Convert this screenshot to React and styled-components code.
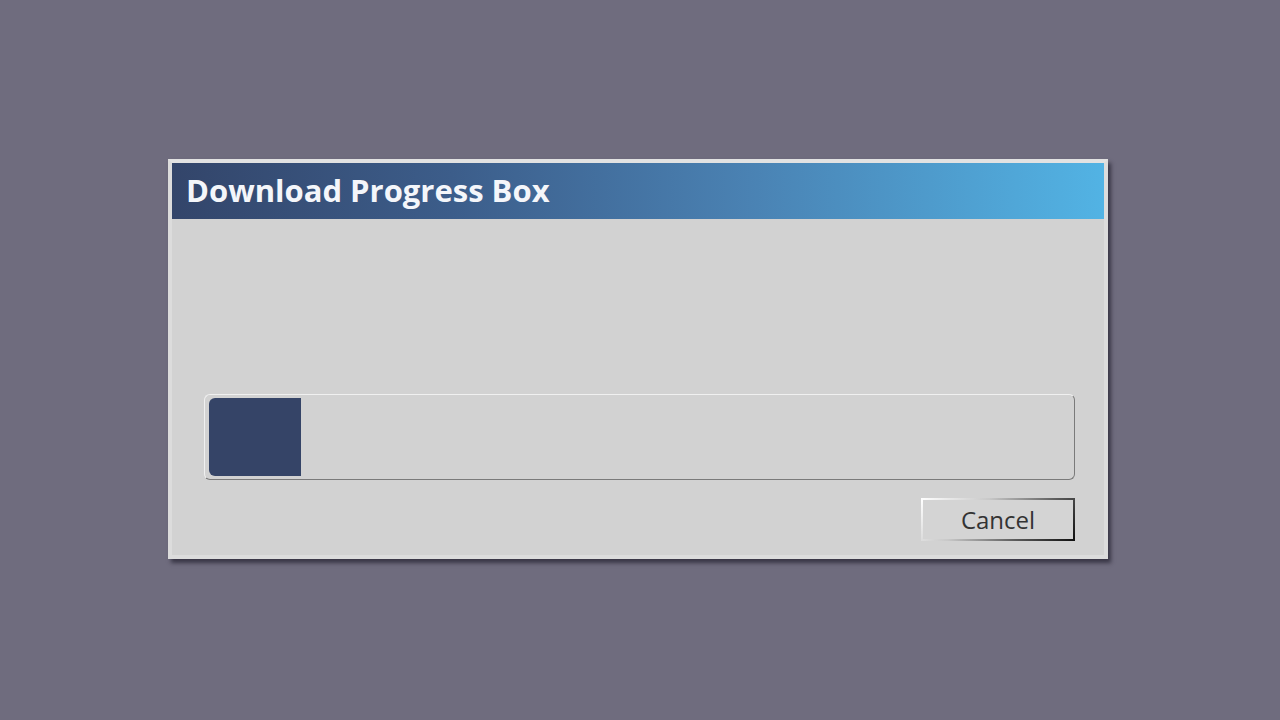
import styled, { createGlobalStyle } from 'styled-components';

const GlobalStyle = createGlobalStyle`
  html, body {
    margin: 0;
    padding: 0;
    background: #6f6c7e;
  }
  body {
    width: 1280px;
    height: 720px;
    overflow: hidden;
    font-family: "Open Sans", "Liberation Sans", sans-serif;
  }
`;

function App() {
  const progress = 10.7;

  return (
    <>
      <GlobalStyle />
      <Page>
        <Dialog>
          <TitleBar>
            <Title>Download Progress Box</Title>
          </TitleBar>
          <Body>
            <Track>
              <Fill style={{ width: `${progress}%` }} />
            </Track>
            <Footer>
              <CancelButton>Cancel</CancelButton>
            </Footer>
          </Body>
        </Dialog>
      </Page>
    </>
  );
}

const Page = styled.div`
  display: flex;
  padding: 159px 0 0 168px;
`;

const Dialog = styled.div`
  width: 940px;
  height: 400px;
  box-sizing: border-box;
  display: flex;
  flex-direction: column;
  background: #d2d2d2;
  border: 4px solid #dcdcdc;
  border-top-color: #e2e2e2;
  box-shadow: 3px 4px 4px rgba(40, 38, 52, 0.75);
`;

const TitleBar = styled.div`
  height: 56px;
  display: flex;
  align-items: center;
  padding: 0 0 3px 14px;
  box-sizing: border-box;
  background: linear-gradient(90deg, #33456a 0%, #3c5d8a 30%, #4a82b3 62%, #52b3e4 100%);
`;

const Title = styled.h1`
  margin: 0;
  color: #f4f6fa;
  font-size: 31px;
  font-weight: 700;
  letter-spacing: 0;
`;

const Body = styled.div`
  flex: 1;
  display: flex;
  flex-direction: column;
  padding: 175px 29px 0 32px;
`;

const Track = styled.div`
  height: 86px;
  box-sizing: border-box;
  padding: 3px 4px;
  border: 1px solid #a8a8a8;
  border-top-color: #f0f0f0;
  border-left-color: #f0f0f0;
  border-right-color: #7a7a7a;
  border-bottom-color: #7a7a7a;
  border-radius: 6px;
  display: flex;
`;

const Fill = styled.div`
  background: #354467;
  border-radius: 6px 0 0 6px;
`;

const Footer = styled.div`
  display: flex;
  justify-content: flex-end;
  margin-top: 18px;
`;

const CancelButton = styled.button`
  width: 154px;
  height: 43px;
  box-sizing: border-box;
  background: #d4d4d4;
  border: 2px solid;
  border-image: linear-gradient(135deg, #ffffff 0%, #c8c8c8 35%, #5a5a5a 70%, #111111 100%) 1;
  color: #333333;
  font-family: "Open Sans", "Liberation Sans", sans-serif;
  font-size: 24px;
  padding: 0;
  cursor: pointer;
`;

export default App;
